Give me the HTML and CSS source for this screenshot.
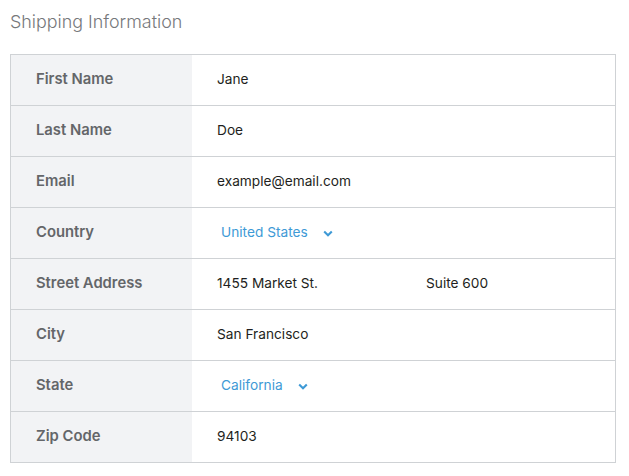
FILE: index.html
```html
<!DOCTYPE html>
<html>
<head>
<meta charset="utf-8">
<link rel="stylesheet" href="styles.css">
</head>
<body>
<h2 class="title">Shipping Information</h2>
<div class="form">
  <div class="row"><div class="label">First Name</div><div class="value">Jane</div></div>
  <div class="row"><div class="label">Last Name</div><div class="value">Doe</div></div>
  <div class="row"><div class="label">Email</div><div class="value">example@email.com</div></div>
  <div class="row"><div class="label">Country</div><div class="value select"><span>United States</span><svg class="chev" width="10" height="7" viewBox="0 0 10 7"><path d="M1.2 1.5 L5 5.2 L8.8 1.5" fill="none" stroke="currentColor" stroke-width="2.1"/></svg></div></div>
  <div class="row"><div class="label">Street Address</div><div class="value split"><span>1455 Market St.</span><span>Suite 600</span></div></div>
  <div class="row"><div class="label">City</div><div class="value">San Francisco</div></div>
  <div class="row"><div class="label">State</div><div class="value select"><span>California</span><svg class="chev" width="10" height="7" viewBox="0 0 10 7"><path d="M1.2 1.5 L5 5.2 L8.8 1.5" fill="none" stroke="currentColor" stroke-width="2.1"/></svg></div></div>
  <div class="row"><div class="label">Zip Code</div><div class="value">94103</div></div>
</div>
</body>
</html>
```
FILE: styles.css
```css
html, body {
  margin: 0;
  padding: 0;
  background: #ffffff;
}
body {
  padding: 10px 0 0 10px;
  font-family: "Inter", "Liberation Sans", sans-serif;
}
.title {
  margin: 0 0 20px 0;
  height: 24px;
  line-height: 24px;
  font-size: 17.9px;
  font-weight: 300;
  color: #76787b;
}
.form {
  width: 606px;
  box-sizing: border-box;
  border: 1px solid #cfd2d5;
}
.row {
  display: grid;
  grid-template-columns: 181px 1fr;
  height: 50px;
}
.row + .row {
  border-top: 1px solid #cfd2d5;
}
.label {
  background: #f2f3f5;
  padding: 0 0 2px 25px;
  display: flex;
  align-items: center;
  font-size: 14.8px;
  font-weight: 600;
  color: #646669;
}
.value {
  padding: 0 0 2px 25px;
  display: flex;
  align-items: center;
  font-size: 13.7px;
  color: #1e1f21;
}
.select {
  padding-left: 29px;
  color: #3e9ad6;
  gap: 15px;
}
.chev {
  margin-top: 2px;
}
.split {
  display: grid;
  grid-template-columns: 209px 1fr;
  align-items: center;
}
```
